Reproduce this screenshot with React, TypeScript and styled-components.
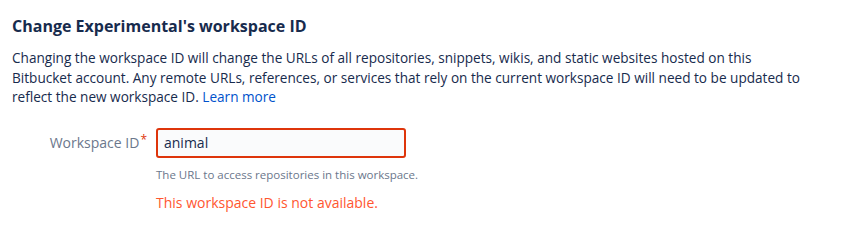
import React from 'react';
import styled, { createGlobalStyle } from 'styled-components';

const GlobalStyle = createGlobalStyle`
  body {
    margin: 0;
    background: #ffffff;
    font-family: "Open Sans", "Noto Sans", sans-serif;
    color: #172b4d;
  }
`;

const Page = styled.div`
  padding: 16px 12px 0 12px;
  width: 831px;
`;

const Heading = styled.h2`
  margin: 0;
  font-size: 16px;
  line-height: 20px;
  font-weight: 700;
  color: #172b4d;
`;

const Text = styled.p`
  margin: 12px 0 0 0;
  font-size: 13.6px;
  line-height: 19.5px;
  color: #172b4d;
  white-space: nowrap;
`;

const Link = styled.a`
  color: #0052cc;
  text-decoration: none;
`;

const Form = styled.div`
  display: grid;
  grid-template-columns: 135px 250px;
  column-gap: 9px;
  margin-top: 21px;
`;

const Label = styled.label`
  justify-self: end;
  align-self: start;
  padding-top: 5px;
  font-size: 14px;
  line-height: 20px;
  color: #6b778c;
  white-space: nowrap;
`;

const Required = styled.span`
  color: #de350b;
  font-size: 12px;
  vertical-align: top;
  position: relative;
  top: -3px;
  margin-left: 1px;
`;

const Field = styled.div`
  display: flex;
  flex-direction: column;
`;

const Input = styled.input<{ $invalid?: boolean }>`
  box-sizing: border-box;
  width: 250px;
  height: 30px;
  padding: 0 6px;
  border: 2px solid ${(p) => (p.$invalid ? '#de350b' : '#dfe1e6')};
  border-radius: 3px;
  background: #fafbfc;
  font-family: inherit;
  font-size: 14px;
  color: #172b4d;
  outline: none;
`;

const Help = styled.div`
  margin-top: 9px;
  font-size: 11.5px;
  line-height: 16px;
  color: #6b778c;
  white-space: nowrap;
`;

const Error = styled.div`
  margin-top: 11px;
  font-size: 14px;
  line-height: 18px;
  color: #ff5630;
  white-space: nowrap;
`;

export default function App() {
  return (
    <Page>
      <GlobalStyle />
      <Heading>Change Experimental's workspace ID</Heading>
      <Text>
        Changing the workspace ID will change the URLs of all repositories, snippets, wikis, and static websites hosted on this
        <br />
        Bitbucket account. Any remote URLs, references, or services that rely on the current workspace ID will need to be updated to
        <br />
        reflect the new workspace ID. <Link href="#">Learn more</Link>
      </Text>
      <Form>
        <Label htmlFor="workspace-id">
          Workspace ID<Required>*</Required>
        </Label>
        <Field>
          <Input id="workspace-id" defaultValue="animal" $invalid />
          <Help>The URL to access repositories in this workspace.</Help>
          <Error>This workspace ID is not available.</Error>
        </Field>
      </Form>
    </Page>
  );
}
